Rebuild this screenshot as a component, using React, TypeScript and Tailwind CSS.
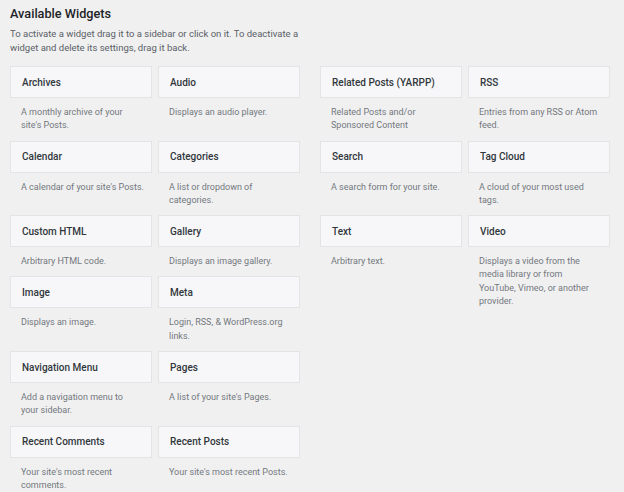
type Widget = { name: string; desc: string[] }

const left: Widget[][] = [
  [
    { name: "Archives", desc: ["A monthly archive of your", "site's Posts."] },
    { name: "Audio", desc: ["Displays an audio player."] },
  ],
  [
    { name: "Calendar", desc: ["A calendar of your site's Posts."] },
    { name: "Categories", desc: ["A list or dropdown of", "categories."] },
  ],
  [
    { name: "Custom HTML", desc: ["Arbitrary HTML code."] },
    { name: "Gallery", desc: ["Displays an image gallery."] },
  ],
  [
    { name: "Image", desc: ["Displays an image."] },
    { name: "Meta", desc: ["Login, RSS, & WordPress.org", "links."] },
  ],
  [
    { name: "Navigation Menu", desc: ["Add a navigation menu to", "your sidebar."] },
    { name: "Pages", desc: ["A list of your site's Pages."] },
  ],
  [
    { name: "Recent Comments", desc: ["Your site's most recent", "comments."] },
    { name: "Recent Posts", desc: ["Your site's most recent Posts."] },
  ],
]

const right: Widget[][] = [
  [
    { name: "Related Posts (YARPP)", desc: ["Related Posts and/or", "Sponsored Content"] },
    { name: "RSS", desc: ["Entries from any RSS or Atom", "feed."] },
  ],
  [
    { name: "Search", desc: ["A search form for your site."] },
    { name: "Tag Cloud", desc: ["A cloud of your most used", "tags."] },
  ],
  [
    { name: "Text", desc: ["Arbitrary text."] },
    {
      name: "Video",
      desc: ["Displays a video from the", "media library or from", "YouTube, Vimeo, or another", "provider."],
    },
  ],
]

const WidgetCard = ({ name, desc }: Widget) => (
  <div className="w-[142px]">
    <div className="h-[32px] flex items-center px-[11px] bg-[#f7f7f9] border border-[#e3e4e6] text-[10px] font-medium text-[#32373c]">
      {name}
    </div>
    <div className="pl-[11px] pt-[8px] pb-[8px] text-[9px] leading-[13.3px] text-[#73787d] whitespace-nowrap">
      {desc.map((l) => (
        <div key={l}>{l}</div>
      ))}
    </div>
  </div>
)

const Group = ({ rows }: { rows: Widget[][] }) => (
  <div className="flex flex-col">
    {rows.map((row, i) => (
      <div key={i} className="flex gap-[6px] items-start">
        {row.map((w) => (
          <WidgetCard key={w.name} {...w} />
        ))}
      </div>
    ))}
  </div>
)

export default function App() {
  return (
    <div
      className="w-[624px] h-[492px] overflow-hidden bg-[#f0f0f1] pl-[10px] pt-[4px]"
      style={{ fontFamily: 'Roboto, "Open Sans", sans-serif' }}
    >
      <h2 className="text-[12.7px] font-medium text-[#1d2327] leading-[20px]">Available Widgets</h2>
      <p className="mt-[3px] text-[9.5px] leading-[14px] text-[#5a6066] whitespace-nowrap">
        To activate a widget drag it to a sidebar or click on it. To deactivate a
        <br />
        widget and delete its settings, drag it back.
      </p>
      <div className="mt-[11px] flex gap-[20px]">
        <Group rows={left} />
        <Group rows={right} />
      </div>
    </div>
  )
}
